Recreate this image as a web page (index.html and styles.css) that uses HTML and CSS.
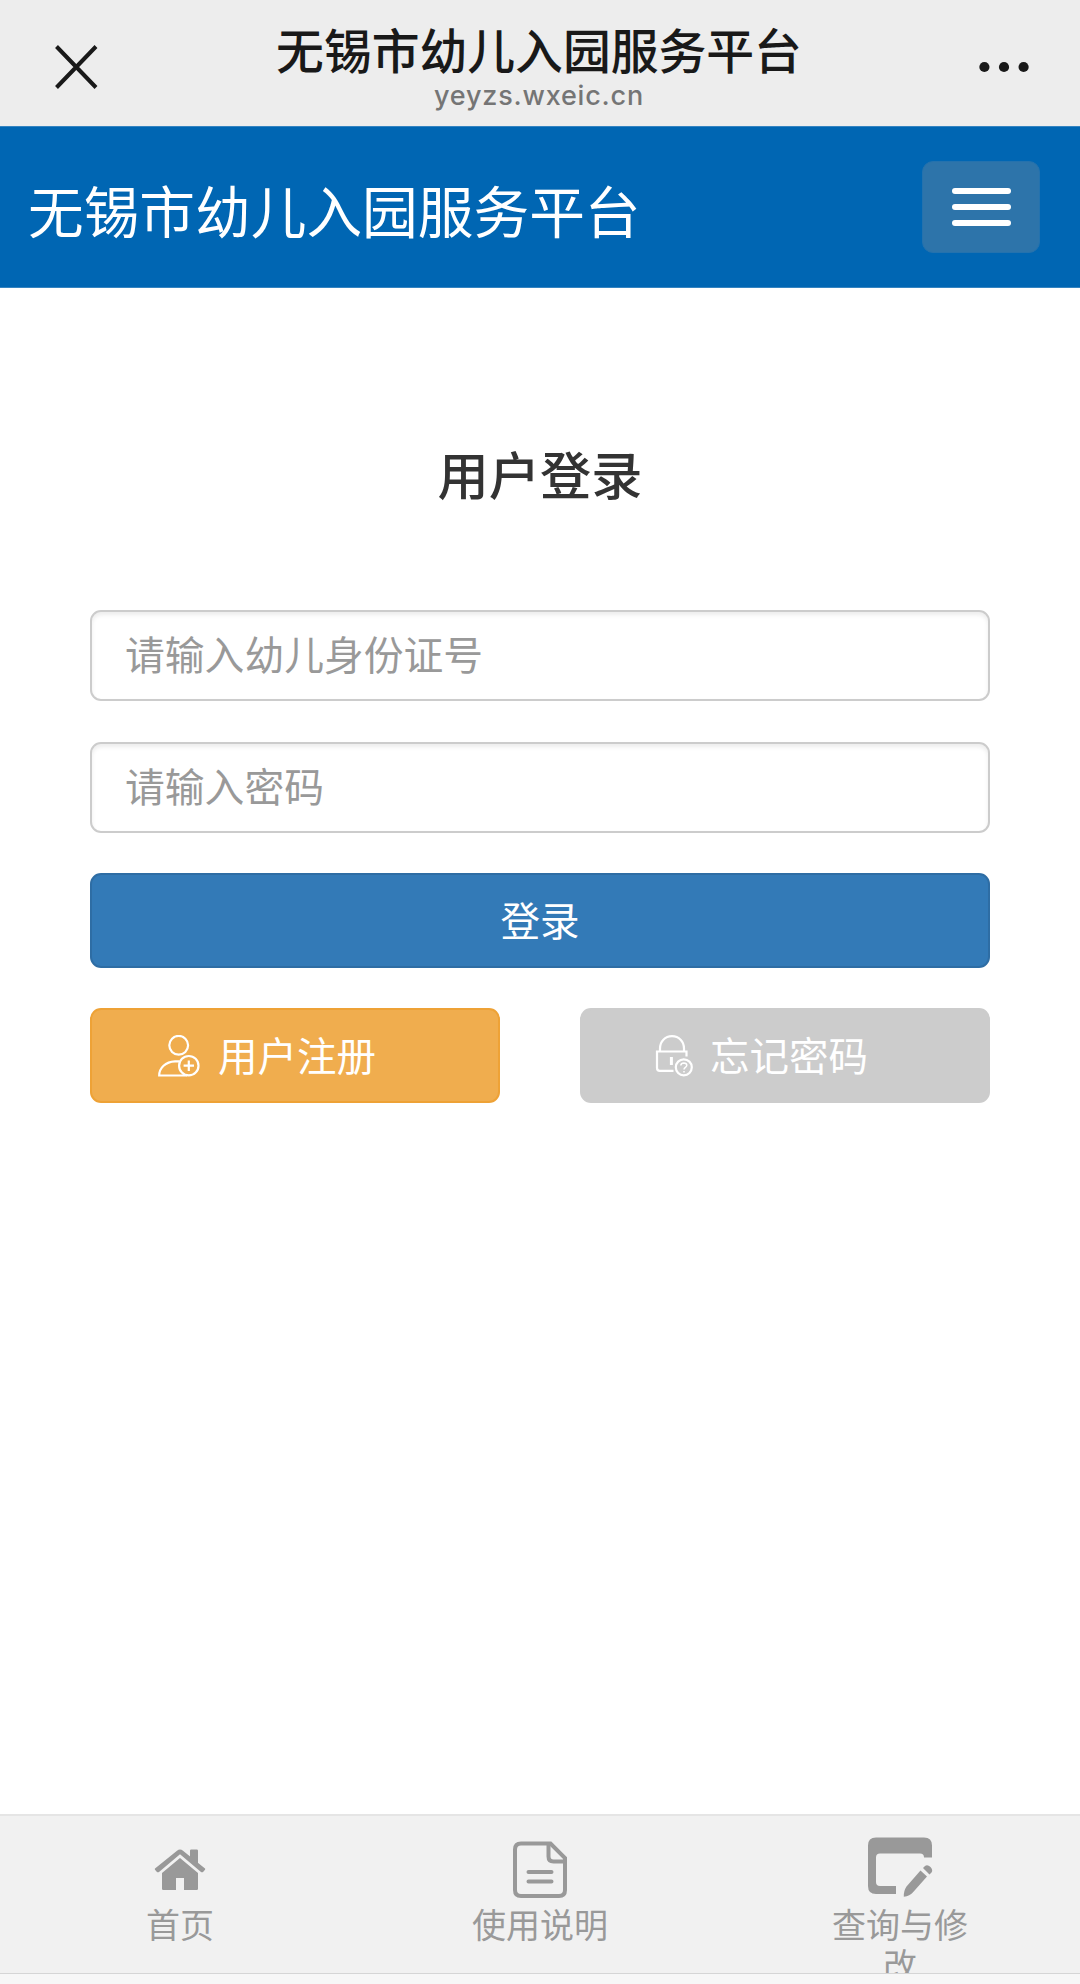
FILE: index.html
```html
<!DOCTYPE html>
<html lang="zh-CN">
<head>
<meta charset="utf-8">
<title>无锡市幼儿入园服务平台</title>
<link rel="stylesheet" href="styles.css">
</head>
<body>
<div class="browser-bar">
  <svg class="close" viewBox="0 0 44 44"><path d="M1.500 1.500L41 42.500M41 1.500L1.500 42.500"/></svg>
  <div class="page-info">
    <div class="page-title">无锡市幼儿入园服务平台</div>
    <div class="page-url">yeyzs.wxeic.cn</div>
  </div>
  <svg class="more" viewBox="0 0 50 12"><circle cx="5.4" cy="6" r="5.1"/><circle cx="25" cy="6" r="5.1"/><circle cx="44.6" cy="6" r="5.1"/></svg>
</div>
<header class="navbar">
  <div class="brand">无锡市幼儿入园服务平台</div>
  <button class="toggle" aria-label="菜单"><span></span><span></span><span></span></button>
</header>
<main class="login">
  <h1>用户登录</h1>
  <input class="field" type="text" placeholder="请输入幼儿身份证号">
  <input class="field" type="password" placeholder="请输入密码">
  <button class="btn primary">登录</button>
  <div class="actions">
    <button class="btn register">
      <svg class="icon" viewBox="0 0 42 42"><circle cx="20.7" cy="10.300" r="9.4"/><path d="M21.500 26.300H17C7.500 26.700 1.200 33 1.200 40.500H29"/><circle cx="30.800" cy="30.700" r="9.7"/><path d="M30.800 25.500V35.900M25.600 30.700H36"/></svg>
      <span>用户注册</span>
    </button>
    <button class="btn forgot">
      <svg class="icon" viewBox="0 0 38 42"><path d="M5 16V13.500C5 6.500 10 1.200 17 1.200S29 6.500 29 13.500V16M31.500 21.500V16.500H2V33Q2 35.800 4.800 35.800H18.500"/><path class="keyhole" d="M16.400 22V30"/><circle cx="28.800" cy="32.300" r="8"/><path class="mark" d="M25.800 30.500Q26 28.100 28.800 28 31.800 28.100 31.800 30.300C31.800 32.300 29 32.300 29 34.400M29 35.900V37.400"/></svg>
      <span>忘记密码</span>
    </button>
  </div>
</main>
<nav class="tabs">
  <a class="tab">
    <svg class="tab-icon" viewBox="0 0 72 66"><path fill="currentColor" d="M36 21.500Q37.500 21.500 39 22.800L61 40.500Q61.500 41 61 41.800L59.300 43.800Q58.200 44.800 57 44L36 26.200 15 44Q13.800 44.800 12.700 43.800L11 41.800Q10.500 41 11 40.500L33 22.800Q34.500 21.500 36 21.500ZM46 29V22.700Q46 21.500 47.200 21.500H52.800Q54 21.500 54 22.700V36ZM36 30L54 45V60.700Q54 62 52.700 62H40V50H32V62H19.300Q18 62 18 60.700V45Z"/></svg>
    <span>首页</span>
  </a>
  <a class="tab">
    <svg class="tab-icon" viewBox="0 0 72 66"><g fill="none" stroke="currentColor" stroke-width="4"><path d="M17 15.500H46.500L61 30V62Q61 68 55 68H17Q11 68 11 62V21.500Q11 15.500 17 15.500Z"/><path d="M44.500 15.500V28.500Q44.500 33.500 49.500 33.500H61"/><path stroke-linecap="round" d="M24.500 44H47.500M24.500 53.500H47.500"/></g></svg>
    <span>使用说明</span>
  </a>
  <a class="tab">
    <svg class="tab-icon" viewBox="0 0 72 66"><g fill="currentColor"><path d="M12 9.500H60Q68 9.500 68 17.500V29.500H60Q60 25.500 56 25.500H16Q12 25.500 12 29.500V54Q12 58 16 58H32V66H12Q4 66 4 58V17.500Q4 9.500 12 9.500Z"/><path d="M56.500 42.500L63 48.500 48.800 64.500Q46 68 39.800 68.800 39.500 63 42.500 58.500ZM59 40L61 38Q63.500 36.200 66.500 39 69.300 42 67.500 44.500L65.500 46.500Z"/></g></svg>
    <span>查询与修改</span>
  </a>
</nav>
<div class="bottom-edge"></div>
</body>
</html>
```
FILE: styles.css
```css
* { box-sizing: border-box; }

body {
  margin: 0;
  height: 1984px;
  display: flex;
  flex-direction: column;
  background: #fff;
  color: #333;
  font-family: Inter, "Noto Sans CJK SC", sans-serif;
  overflow: hidden;
}

button, input { font-family: inherit; margin: 0; }

.browser-bar {
  height: 126px;
  flex: none;
  padding: 0 51px 0 55px;
  display: flex;
  justify-content: space-between;
  background: #ededed;
  color: #191919;
}
.close {
  width: 44px;
  height: 44px;
  margin-top: 45px;
  fill: none;
  stroke: currentColor;
  stroke-width: 4;
}
.more {
  width: 50px;
  height: 12px;
  margin-top: 61px;
  fill: currentColor;
}
.page-info { text-align: center; padding-top: 22px; }
.page-title {
  font-size: 47.8px;
  line-height: 60px;
  font-weight: 500;
}
.page-url {
  font-size: 27px;
  line-height: 28px;
  letter-spacing: .8px;
  font-weight: 500;
  color: #757575;
}

.navbar {
  height: 162px;
  flex: none;
  padding: 0 40px 0 28px;
  display: flex;
  align-items: center;
  justify-content: space-between;
  background: #0066b3;
  border-top: 1px solid #3584c1;
  border-bottom: 1px solid #3584c1;
}
.brand {
  color: #fff;
  font-size: 55.7px;
  line-height: 80px;
  padding-top: 12px;
}
.toggle {
  width: 118px;
  height: 92px;
  padding: 0;
  border: 1px solid #2472ae;
  border-radius: 11px;
  background: #2d74aa;
  display: flex;
  flex-direction: column;
  align-items: center;
  justify-content: center;
  gap: 10px;
}
.toggle span {
  width: 59px;
  height: 6px;
  border-radius: 3px;
  background: #fff;
}

.login {
  flex: 1;
  padding: 148px 90px 0;
  display: flex;
  flex-direction: column;
}
h1 {
  margin: 0 0 94px;
  text-align: center;
  font-size: 51.2px;
  line-height: 80px;
  font-weight: 500;
}
.field {
  height: 91px;
  margin-bottom: 41px;
  padding: 0 33px;
  border: 2px solid #ccc;
  border-radius: 11px;
  background: #fff;
  box-shadow: inset 0 3px 4px rgba(0, 0, 0, .075);
  font-size: 39.8px;
  outline: none;
}
.field::placeholder { color: #999; opacity: 1; }
.btn {
  height: 95px;
  padding: 0;
  border: 2px solid;
  border-radius: 11px;
  color: #fff;
  font-size: 39.5px;
  line-height: 60px;
}
.primary {
  margin: -1px 0 40px;
  padding-top: 3px;
  background: #337ab7;
  border-color: #2e6da4;
}
.actions {
  display: grid;
  grid-template-columns: 410px 410px;
  justify-content: space-between;
}
.actions .btn {
  display: flex;
  align-items: center;
  text-align: left;
}
.actions span { padding-top: 2px; }
.register { background: #f0ad4e; border-color: #eea236; padding-left: 66px; }
.forgot { background: #ccc; border-color: #ccc; padding-left: 73px; }
.icon {
  height: 42px;
  fill: none;
  stroke: #fff;
  stroke-width: 2.200;
}
.register .icon { width: 42px; margin-right: 18px; }
.forgot .icon { width: 38px; margin-right: 17px; }
.forgot .keyhole { stroke-width: 3; }
.forgot .mark { stroke-width: 1.5; }

.tabs {
  height: 160px;
  flex: none;
  display: grid;
  grid-template-columns: repeat(3, 1fr);
  background: #f1f1f1;
  border-top: 2px solid #e5e5e5;
  border-bottom: 1px solid #d5d5d5;
  color: #999;
  overflow: hidden;
}
.tab {
  display: flex;
  flex-direction: column;
  align-items: center;
  padding-top: 12px;
}
.tab-icon {
  width: 72px;
  height: 66px;
  flex: none;
  overflow: visible;
}
.tab span {
  width: 144px;
  margin-top: 12px;
  text-align: center;
  font-size: 34px;
  line-height: 40px;
}
.bottom-edge { height: 10px; flex: none; background: #f7f7f7; }
```
